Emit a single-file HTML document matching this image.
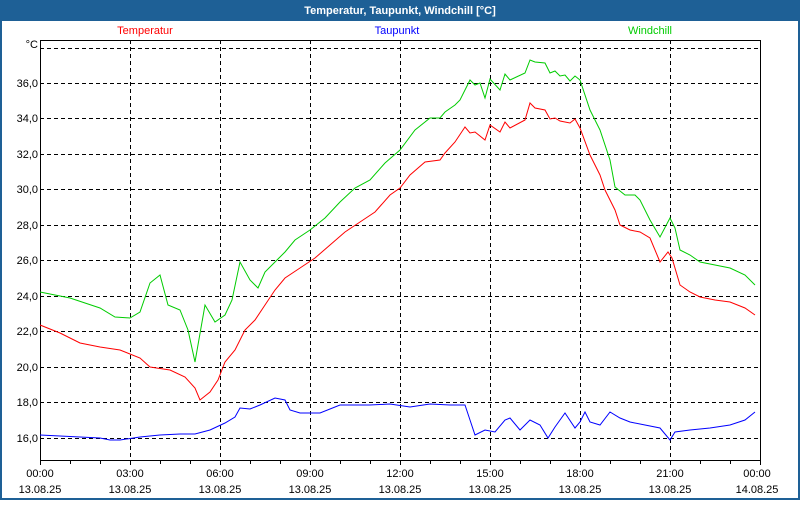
<!DOCTYPE html>
<html><head><meta charset="utf-8"><style>
html,body{margin:0;padding:0;background:#fff;}
body{width:800px;height:500px;overflow:hidden;font-family:"Liberation Sans",sans-serif;}
</style></head><body>
<svg width="800" height="500" xmlns="http://www.w3.org/2000/svg" font-family="Liberation Sans, sans-serif" font-size="11">
<rect x="0" y="0" width="800" height="500" fill="#fff"/>
<rect x="0" y="0" width="800" height="21" fill="#1e6096"/>
<rect x="0" y="0" width="2" height="500" fill="#1e6096"/>
<rect x="798" y="0" width="2" height="500" fill="#1e6096"/>
<rect x="0" y="498" width="800" height="2" fill="#1e6096"/>
<text x="400" y="14" text-anchor="middle" fill="#fff" font-weight="bold">Temperatur, Taupunkt, Windchill [°C]</text>
<text x="145" y="34" text-anchor="middle" fill="#f00">Temperatur</text>
<text x="397" y="34" text-anchor="middle" fill="#00f">Taupunkt</text>
<text x="650" y="34" text-anchor="middle" fill="#0c0">Windchill</text>
<g stroke="#000" stroke-dasharray="4,3" stroke-width="1" shape-rendering="crispEdges">
<path d="M40 48.5H760M40 83.5H760M40 118.5H760M40 154.5H760M40 189.5H760M40 225.5H760M40 260.5H760M40 296.5H760M40 331.5H760M40 367.5H760M40 402.5H760M40 438.5H760"/>
<path d="M130.5 40V460M220.5 40V460M310.5 40V460M400.5 40V460M490.5 40V460M580.5 40V460M670.5 40V460"/>
</g>
<rect x="40.5" y="40.5" width="720" height="420" fill="none" stroke="#000" shape-rendering="crispEdges"/>
<g stroke="#000" shape-rendering="crispEdges"><path d="M40.5 460v5M70.5 460v4M100.5 460v4M130.5 460v5M160.5 460v4M190.5 460v4M220.5 460v5M250.5 460v4M280.5 460v4M310.5 460v5M340.5 460v4M370.5 460v4M400.5 460v5M430.5 460v4M460.5 460v4M490.5 460v5M520.5 460v4M550.5 460v4M580.5 460v5M610.5 460v4M640.5 460v4M670.5 460v5M700.5 460v4M730.5 460v4M760.5 460v5"/></g>
<g text-anchor="end" fill="#000">
<text x="38" y="48">°C</text>
<text x="38" y="87">36,0</text><text x="38" y="122">34,0</text><text x="38" y="158">32,0</text>
<text x="38" y="193">30,0</text><text x="38" y="229">28,0</text><text x="38" y="264">26,0</text>
<text x="38" y="300">24,0</text><text x="38" y="335">22,0</text><text x="38" y="371">20,0</text>
<text x="38" y="406">18,0</text><text x="38" y="442">16,0</text>
</g>
<g text-anchor="middle" fill="#000">
<text x="40" y="477">00:00</text><text x="40" y="493">13.08.25</text>
<text x="130" y="477">03:00</text><text x="130" y="493">13.08.25</text>
<text x="220" y="477">06:00</text><text x="220" y="493">13.08.25</text>
<text x="310" y="477">09:00</text><text x="310" y="493">13.08.25</text>
<text x="400" y="477">12:00</text><text x="400" y="493">13.08.25</text>
<text x="490" y="477">15:00</text><text x="490" y="493">13.08.25</text>
<text x="580" y="477">18:00</text><text x="580" y="493">13.08.25</text>
<text x="670" y="477">21:00</text><text x="670" y="493">13.08.25</text>
<text x="757" y="477">00:00</text><text x="757" y="493">14.08.25</text>
</g>
<g fill="none" stroke-width="1">
<polyline stroke="#f00" points="40,325 60,333 80,343 100,347 120,350 140,358 150,367 170,370 185,377 195,388 200,400 210,392 218,380 225,362 235,350 245,330 255,320 265,305 275,290 285,278 300,268 315,258 330,245 345,232 360,222 375,212 390,195 400,188 410,175 425,162 440,160 445,153 455,142 465,127 470,133 475,132 485,140 490,125 500,132 505,122 510,128 525,120 530,103 535,108 545,110 550,119 555,118 560,121 570,123 575,119 580,128 590,155 600,175 605,190 615,210 620,225 630,230 640,232 650,238 660,262 668,252 672,258 680,285 690,292 700,297 715,300 730,302 745,308 755,315"/>
<polyline stroke="#0c0" points="40,292 55,295 70,298 85,303 100,308 115,317 130,318 140,312 150,283 160,275 168,305 180,310 188,330 195,362 205,305 215,322 225,315 232,300 240,262 250,280 258,288 265,272 275,262 285,252 295,240 310,230 325,218 340,202 355,188 370,180 385,163 400,150 415,130 430,118 440,118 445,112 455,105 460,100 470,80 475,85 480,83 485,98 490,79 500,90 505,74 510,80 525,73 530,60 535,62 545,63 550,73 555,71 560,76 565,75 570,81 575,76 580,80 590,110 600,130 610,160 615,187 625,195 635,195 640,200 650,220 660,237 670,218 675,228 680,250 690,255 700,262 715,265 730,268 745,275 755,285"/>
<polyline stroke="#00f" points="40,435 60,436 80,437 100,438 110,440 120,440 140,437 160,435 180,434 195,434 210,430 225,423 235,417 240,408 250,409 260,405 275,398 285,400 290,410 300,413 320,413 340,405 355,405 370,405 390,404 410,407 430,404 450,405 465,405 470,420 475,435 485,430 495,432 505,420 510,418 520,430 530,420 540,425 548,438 555,427 565,413 575,428 580,422 585,412 590,422 600,425 610,412 620,418 630,422 645,425 660,428 670,440 675,432 690,430 710,428 730,425 745,420 755,412"/>
</g>
</svg>
</body></html>
